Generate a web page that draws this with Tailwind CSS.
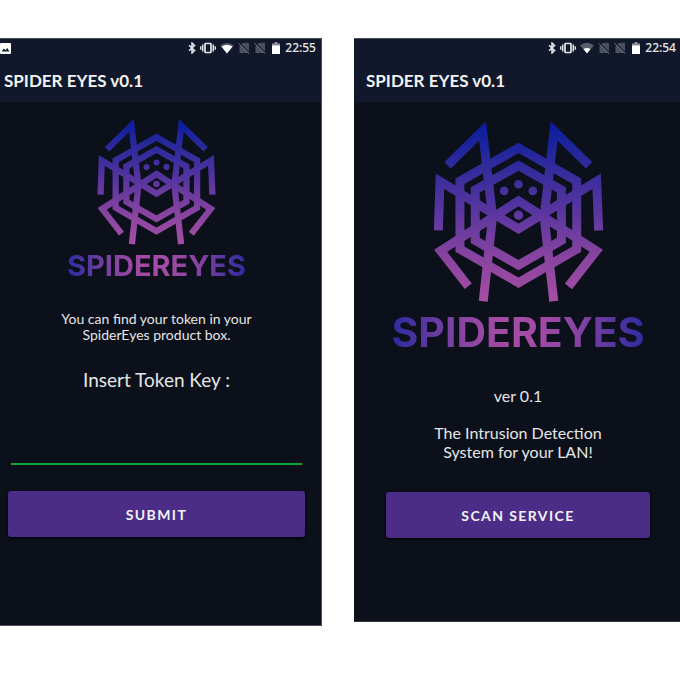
<!DOCTYPE html>
<html lang="en">
<head>
<meta charset="utf-8">
<meta name="viewport" content="width=device-width, initial-scale=1">
<title>Spider Eyes</title>
<script src="https://cdn.jsdelivr.net/npm/@tailwindcss/browser@4"></script>
</head>
<body class="bg-white font-['Lato',sans-serif] text-[#e6e6e6]">
<svg class="absolute h-0 w-0" aria-hidden="true">
  <defs>
    <linearGradient id="legs" gradientUnits="userSpaceOnUse" x1="0" y1="60" x2="0" y2="592">
      <stop offset="0" stop-color="#0a1d9c"/><stop offset=".22" stop-color="#2e2a9b"/><stop offset=".5" stop-color="#5b369f"/><stop offset=".75" stop-color="#8844a0"/><stop offset="1" stop-color="#a64ea3"/>
    </linearGradient>
    <symbol id="spider" viewBox="65 42 520 556">
      <g fill="none" stroke="url(#legs)" stroke-width="27" stroke-miterlimit="10">
        <path d="M325 129 500 229V433L325 534 149 433V229Z"/>
        <path d="M325 182 454 255V407L325 481 195 407V255Z"/>
        <path d="M112 181 217 78 247 335 219 590"/>
        <path d="M537 181 432 78 402 335 431 590"/>
        <path d="M84 377 89 229 325 372 560 229 566 377"/>
        <path d="M174 545 91 438 325 288 559 438 475 545"/>
      </g>
      <g fill="url(#legs)"><circle cx="325" cy="238" r="13"/><circle cx="282" cy="258" r="13"/><circle cx="368" cy="258" r="13"/><circle cx="325" cy="331" r="14"/></g>
    </symbol>
    <symbol id="bluetooth" viewBox="0 0 8 12"><path d="M1 3.2 6.6 8.6 4 11V1L6.6 3.4 1 8.8" fill="none" stroke="#e4e4e8" stroke-width="1.5"/></symbol>
    <symbol id="vibrate" viewBox="0 0 16 12"><rect x="5" y="1.5" width="6" height="9" rx=".5" fill="none" stroke="#e4e4e8" stroke-width="1.7"/><path d="M2.7 2.5v7M13.3 2.5v7" stroke="#e4e4e8" stroke-width="1.5"/><path d="M.7 4.2v3.6M15.3 4.2v3.6" stroke="#e4e4e8" stroke-width="1.3"/></symbol>
    <symbol id="nosim" viewBox="0 0 12 12"><path d="M4.500 1H10q1 0 1 1v9H1.500V4Z" fill="#4b505e"/><path d="M.5 0 12 11.3" stroke="#11182b" stroke-width="1.2"/><path d="M.5 1.2 11.500 12" stroke="#737784" stroke-width="1"/></symbol>
    <symbol id="battery" viewBox="0 0 8 12"><path d="M2.5 0h3v1.5H8V12H0V1.5h2.5Z" fill="#8f929b"/><path d="M0 3.5h8V12H0Z" fill="#fff"/></symbol>
  </defs>
</svg>
<main class="flex items-start gap-8 pt-[38px]">
  <section class="min-w-0 flex-[321] border-r border-b border-[#4a4e59] bg-[#0c101b] pb-[88px]">
    <header class="bg-[#11182b] border-t border-[#4a4e59] border-b border-b-[#0d1321]">
      <div class="flex h-[18px] items-center justify-end pr-[5px]">
        <svg class="mr-auto h-[11px] w-[11px]" viewBox="0 0 11 11"><rect width="11" height="11" rx="1" fill="#fff"/><path d="M1.5 8.5 4 5.5l1.5 1.8L7.3 5l2.2 3.5Z" fill="#11182b"/></svg>
        <svg class="mr-1 h-3 w-2"><use href="#bluetooth"/></svg>
        <svg class="mr-1 h-3 w-4"><use href="#vibrate"/></svg>
        <svg class="mr-1 h-3 w-[14px]" viewBox="0 0 14 12"><path d="M7 11.5 0 3.5Q7-2 14 3.5Z" fill="#4b505e"/><path d="M7 11.5 1.4 4.6Q7 1 12.6 4.6Z" fill="#fff"/></svg>
        <svg class="mr-1 h-3 w-3"><use href="#nosim"/></svg>
        <svg class="mr-[6px] h-3 w-3"><use href="#nosim"/></svg>
        <svg class="mr-[5px] h-3 w-2"><use href="#battery"/></svg>
        <time class="font-['Noto_Sans'] text-[12px] leading-4 font-medium">22:55</time>
      </div>
      <h1 class="pt-[13px] pb-[10px] pl-1 text-[17px] leading-[22px] font-bold text-[#f2f2f2]">SPIDER EYES v0.1</h1>
    </header>
    <form class="flex flex-col items-center pt-[14px] pr-4 pl-2 text-center">
      <svg class="h-[129px] w-[121px]"><use href="#spider"/></svg>
      <p class="mt-1 bg-[radial-gradient(circle_at_50%_40%,#a34ba5_15%,#8844a2_45%,#2e2ba0_98%)] bg-clip-text font-['Inter'] text-[29px] leading-8 font-bold text-transparent">SPIDEREYES</p>
      <p class="mt-[29px] text-[14px] leading-4">You can find your token in your<br>SpiderEyes product box.</p>
      <label for="token" class="mt-[25px] text-[19px] leading-6">Insert Token Key :</label>
      <div class="w-full px-[3px]"><input id="token" type="text" class="mt-[31px] h-[42px] w-full border-b-2 border-[#12a43b] bg-transparent text-center text-lg outline-none"></div>
      <button type="submit" class="mt-[26px] h-[46px] w-full rounded-[3px] bg-[#4b2d87] text-[14px] font-bold tracking-widest text-[#f2f2f2] shadow-sm shadow-black">SUBMIT</button>
    </form>
  </section>
  <section class="min-w-0 flex-[326] border-b border-[#30343f] bg-[#0c101b] pb-[83px]">
    <header class="bg-[#11182b] border-t border-[#4a4e59] border-b border-b-[#0d1321]">
      <div class="flex h-[18px] items-center justify-end pr-1">
        <svg class="mr-1 h-3 w-2"><use href="#bluetooth"/></svg>
        <svg class="mr-1 h-3 w-4"><use href="#vibrate"/></svg>
        <svg class="mr-1 h-3 w-[14px]" viewBox="0 0 14 12"><path d="M7 11.5 0 3.5Q7-2 14 3.5Z" fill="#5a5e6b"/><path d="M7 11.5 3.5 7Q7 5 10.500 7Z" fill="#fff"/></svg>
        <svg class="mr-1 h-3 w-3"><use href="#nosim"/></svg>
        <svg class="mr-[6px] h-3 w-3"><use href="#nosim"/></svg>
        <svg class="mr-[5px] h-3 w-2"><use href="#battery"/></svg>
        <time class="font-['Noto_Sans'] text-[12px] leading-4 font-medium">22:54</time>
      </div>
      <h1 class="pt-[13px] pb-[10px] pl-3 text-[17px] leading-[22px] font-bold text-[#f2f2f2]">SPIDER EYES v0.1</h1>
    </header>
    <div class="flex flex-col items-center pt-4 pr-[30px] pl-8 text-center">
      <svg class="h-[185px] w-[173px]"><use href="#spider"/></svg>
      <p class="mt-2 bg-[radial-gradient(circle_at_50%_40%,#a34ba5_15%,#8844a2_45%,#2e2ba0_98%)] bg-clip-text font-['Inter'] text-[41px] leading-10 font-bold text-transparent">SPIDEREYES</p>
      <p class="mt-[34px] text-[16px] leading-5">ver 0.1</p>
      <p class="mt-[17px] text-[16px] leading-[19px]">The Intrusion Detection<br>System for your LAN!</p>
      <button type="button" class="mt-[31px] h-[46px] w-full rounded-[3px] bg-[#4b2d87] text-[14px] font-bold tracking-widest text-[#f2f2f2] shadow-sm shadow-black">SCAN SERVICE</button>
    </div>
  </section>
</main>
</body>
</html>
